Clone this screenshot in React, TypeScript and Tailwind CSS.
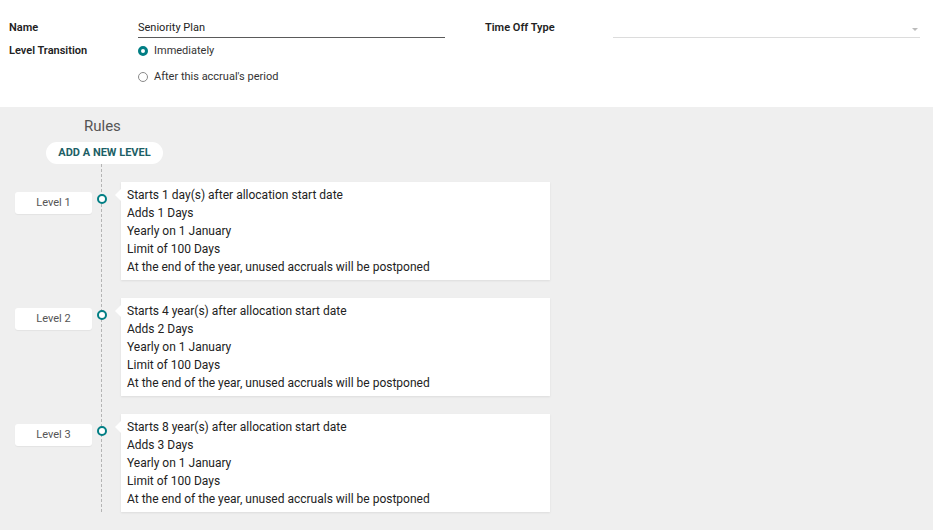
import React from "react";

type Level = {
  name: string;
  start: string;
  adds: string;
};

const levels: Level[] = [
  { name: "Level 1", start: "Starts 1 day(s) after allocation start date", adds: "Adds 1 Days" },
  { name: "Level 2", start: "Starts 4 year(s) after allocation start date", adds: "Adds 2 Days" },
  { name: "Level 3", start: "Starts 8 year(s) after allocation start date", adds: "Adds 3 Days" },
];

function Radio({ checked, label }: { checked?: boolean; label: string }) {
  return (
    <div className="flex h-[18px] items-center gap-[6px]">
      {checked ? (
        <span className="box-border size-[10px] rounded-full border-[3px] border-[#017e84] bg-white" />
      ) : (
        <span className="box-border size-[10px] rounded-full border border-[#8a8a8a] bg-white" />
      )}
      <span className="text-[11px] text-[#333]">{label}</span>
    </div>
  );
}

function LevelRow({ level }: { level: Level }) {
  return (
    <div className="flex items-start">
      <div className="ml-[15px] mt-[10px] flex h-[22px] w-[77px] items-center justify-center rounded-[3px] bg-white pt-[1px] text-[11px] text-[#555] shadow-[0_1px_1px_rgba(0,0,0,0.05)]">
        {level.name}
      </div>
      <div className="ml-[5px] mt-[12px] box-border size-[10px] rounded-full border-2 border-[#017e84] bg-white" />
      <div className="relative ml-[14px] w-[429px] bg-white px-[6px] py-[4px] text-[12px] leading-[18px] text-[#222] shadow-[0_1px_2px_rgba(0,0,0,0.08)]">
        <span className="absolute left-[-6px] top-[7px] h-0 w-0 border-y-[6px] border-r-[6px] border-y-transparent border-r-white" />
        <div>{level.start}</div>
        <div>{level.adds}</div>
        <div>Yearly on 1 January</div>
        <div>Limit of 100 Days</div>
        <div>At the end of the year, unused accruals will be postponed</div>
      </div>
    </div>
  );
}

export default function App() {
  return (
    <div className="flex h-[530px] w-[933px] flex-col overflow-hidden bg-[#efefef] font-['Roboto',sans-serif]">
      <section className="flex h-[107px] shrink-0 gap-[40px] bg-white pl-[9px] pr-[13px] pt-[19px]">
        <div className="flex w-[436px] flex-col">
          <div className="flex h-[19px] items-start">
            <span className="w-[129px] pt-[1px] text-[11px] font-semibold text-[#222]">Name</span>
            <div className="flex h-[19px] flex-1 items-start border-b border-[#5a5a5a] pt-[1px] text-[11px] text-[#222]">
              Seniority Plan
            </div>
          </div>
          <div className="mt-[4px] flex items-start">
            <span className="w-[129px] pt-[1px] text-[11px] font-semibold text-[#222]">Level Transition</span>
            <div className="flex flex-col gap-[8px]">
              <Radio checked label="Immediately" />
              <Radio label="After this accrual's period" />
            </div>
          </div>
        </div>
        <div className="flex flex-1 flex-col">
          <div className="flex h-[19px] items-start">
            <span className="w-[128px] pt-[1px] text-[11px] font-semibold text-[#222]">Time Off Type</span>
            <div className="flex h-[19px] flex-1 items-center justify-end border-b border-[#dcdcdc] pr-[2px]">
              <span className="mt-[3px] h-0 w-0 border-x-[3px] border-t-[3px] border-x-transparent border-t-[#bbb]" />
            </div>
          </div>
        </div>
      </section>

      <section className="flex flex-col">
        <div className="ml-[84px] mt-[9px] text-[15px] leading-[20px] text-[#555]">Rules</div>
        <button
          type="button"
          className="ml-[46px] mt-[6px] h-[22px] w-[117px] rounded-full bg-white text-[11px] font-bold text-[#1d5f66]"
        >
          ADD A NEW LEVEL
        </button>
        <div className="relative flex flex-col gap-[18px] pt-[18px]">
          <div className="absolute bottom-0 left-[101px] top-0 border-l border-dashed border-[#b5b5b5]" />
          {levels.map((level) => (
            <div key={level.name} className="relative">
              <LevelRow level={level} />
            </div>
          ))}
        </div>
      </section>
    </div>
  );
}
